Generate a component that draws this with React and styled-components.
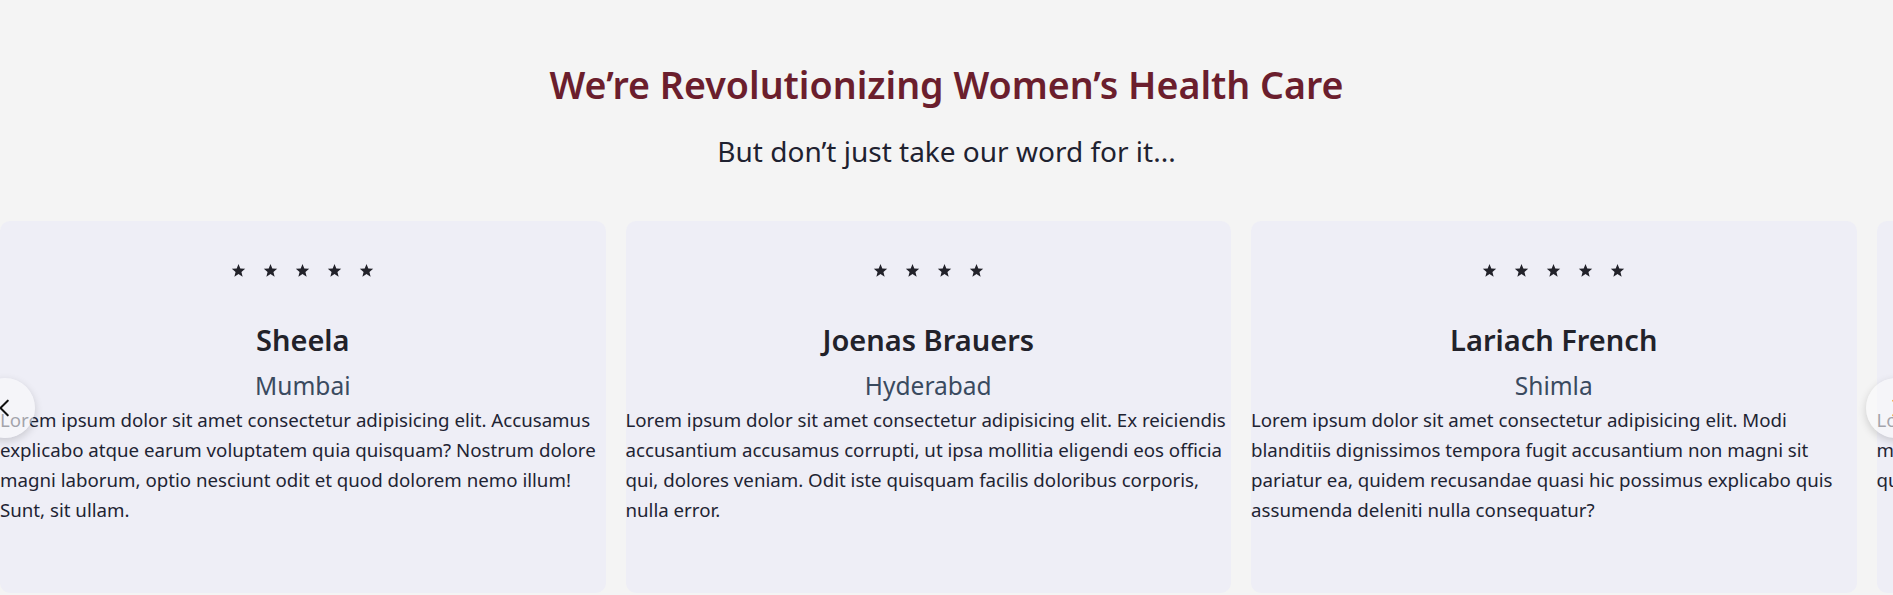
import React from "react";
import styled, { createGlobalStyle } from "styled-components";

const GlobalStyle = createGlobalStyle`
  * { box-sizing: border-box; }
  body {
    margin: 0;
    background: #f4f4f4;
    font-family: "Noto Sans", "Open Sans", sans-serif;
    overflow: hidden;
  }
`;

const reviews = [
  {
    stars: 5,
    name: "Sheela",
    city: "Mumbai",
    text: "Lorem ipsum dolor sit amet consectetur adipisicing elit. Accusamus explicabo atque earum voluptatem quia quisquam? Nostrum dolore magni laborum, optio nesciunt odit et quod dolorem nemo illum! Sunt, sit ullam.",
  },
  {
    stars: 4,
    name: "Joenas Brauers",
    city: "Hyderabad",
    text: "Lorem ipsum dolor sit amet consectetur adipisicing elit. Ex reiciendis accusantium accusamus corrupti, ut ipsa mollitia eligendi eos officia qui, dolores veniam. Odit iste quisquam facilis doloribus corporis, nulla error.",
  },
  {
    stars: 5,
    name: "Lariach French",
    city: "Shimla",
    text: "Lorem ipsum dolor sit amet consectetur adipisicing elit. Modi blanditiis dignissimos tempora fugit accusantium non magni sit pariatur ea, quidem recusandae quasi hic possimus explicabo quis assumenda deleniti nulla consequatur?",
  },
  {
    stars: 5,
    name: "Ananya Rao",
    city: "Pune",
    text: "Lorem ipsum dolor sit amet consectetur adipisicing elit. Voluptates magni dolorum facere, quis vitae nemo totam sed ipsam eveniet quod aperiam quae.",
  },
];

function Star() {
  return (
    <svg width="15" height="15" viewBox="0 0 24 24">
      <polygon
        points="12,1.5 14.9,8.8 22.7,9.3 16.7,14.3 18.6,21.9 12,17.7 5.4,21.9 7.3,14.3 1.3,9.3 9.1,8.8"
        fill="#22222a"
      />
    </svg>
  );
}

function Chevron({ dir }) {
  const d = dir === "left" ? "M15 4 L7 12 L15 20" : "M9 4 L17 12 L9 20";
  return (
    <svg width="22" height="22" viewBox="0 0 24 24" fill="none">
      <path d={d} stroke="currentColor" strokeWidth="2.2" strokeLinecap="round" strokeLinejoin="round" />
    </svg>
  );
}

function Testimonials() {
  return (
    <Section>
      <Title>We’re Revolutionizing Women’s Health Care</Title>
      <Subtitle>But don’t just take our word for it...</Subtitle>
      <Slider>
        <Track>
          {reviews.map((r) => (
            <Card key={r.name}>
              <Stars>
                {Array.from({ length: r.stars }).map((_, i) => (
                  <Star key={i} />
                ))}
              </Stars>
              <Name>{r.name}</Name>
              <City>{r.city}</City>
              <Quote>{r.text}</Quote>
            </Card>
          ))}
        </Track>
        <Arrow side="left" aria-label="previous">
          <Chevron dir="left" />
        </Arrow>
        <Arrow side="right" aria-label="next">
          <Chevron dir="right" />
        </Arrow>
      </Slider>
    </Section>
  );
}

export default function App() {
  return (
    <>
      <GlobalStyle />
      <Testimonials />
    </>
  );
}

const Section = styled.section`
  padding-top: 61px;
  text-align: center;
`;

const Title = styled.h2`
  margin: 0;
  font-size: 37.6px;
  line-height: 48px;
  font-weight: 600;
  color: #6b1e2d;
`;

const Subtitle = styled.p`
  margin: 24px 0 0;
  font-size: 28px;
  line-height: 36px;
  color: #1f2230;
`;

const Slider = styled.div`
  position: relative;
  margin-top: 52px;
`;

const Track = styled.div`
  display: flex;
  gap: 20px;
  overflow: hidden;
`;

const Card = styled.div`
  flex: 0 0 605.5px;
  height: 372px;
  padding-top: 42px;
  background: #eeeef6;
  border-radius: 10px;
`;

const Stars = styled.div`
  display: flex;
  justify-content: center;
  gap: 17px;
  height: 15px;
`;

const Name = styled.h3`
  margin: 42px 0 0;
  font-size: 29px;
  line-height: 40px;
  font-weight: 600;
  color: #22222a;
`;

const City = styled.h4`
  margin: 10px 0 0;
  font-size: 24.5px;
  line-height: 32px;
  font-weight: 400;
  color: #3a4a5f;
`;

const Quote = styled.p`
  margin: 3px 0 0;
  text-align: left;
  font-size: 18.7px;
  line-height: 30px;
  color: #1e2433;
`;

const Arrow = styled.button`
  position: absolute;
  top: 157px;
  ${(p) => (p.side === "left" ? "left: -25px;" : "left: 1866px;")}
  width: 60px;
  height: 60px;
  border: none;
  border-radius: 50%;
  padding: 0;
  display: flex;
  align-items: center;
  justify-content: center;
  background: rgba(250, 250, 252, 0.6);
  box-shadow: 0 3px 8px rgba(0, 0, 0, 0.16);
  color: ${(p) => (p.side === "left" ? "#111" : "#f0a020")};
  cursor: pointer;
`;
